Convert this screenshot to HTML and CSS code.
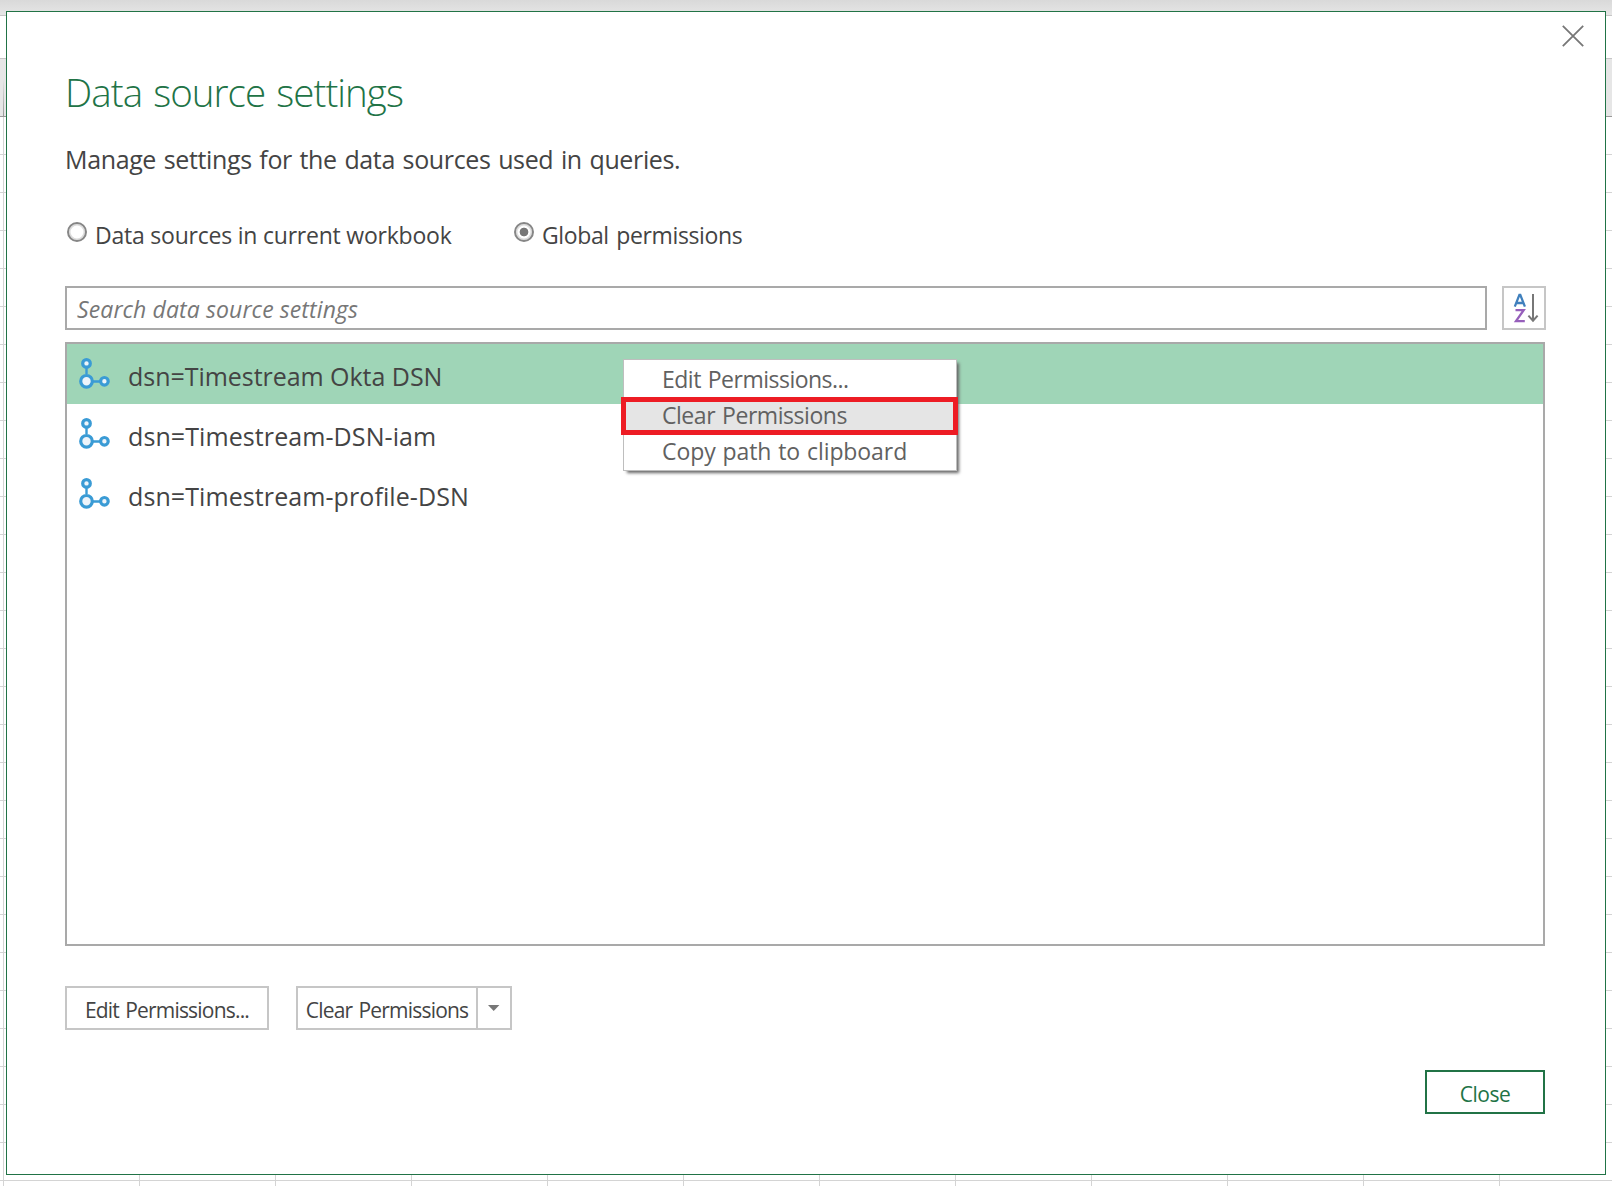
FILE: index.html
```html
<!DOCTYPE html>
<html lang="en">
<head>
<meta charset="utf-8">
<title>Data source settings</title>
<link rel="stylesheet" href="styles.css">
</head>
<body>
<svg width="0" height="0" class="defs">
  <symbol id="nodes" viewBox="0 0 32 32">
    <g fill="#eef4fa" stroke="#3a9bd5" stroke-width="3.2">
      <path d="M7.5 8v8M14 23.5h7" fill="none" stroke-width="2.4"/>
      <circle cx="7.5" cy="5.4" r="3.8"/>
      <circle cx="7.5" cy="23.3" r="5.8"/>
      <circle cx="25.4" cy="23.3" r="3.8"/>
    </g>
  </symbol>
</svg>
<main class="dialog">
  <button class="dismiss" aria-label="Close"><svg width="22" height="22" viewBox="0 0 22 22"><path d="M.8.8l20.4 20.4M21.2.8L.8 21.2" stroke="#777" stroke-width="1.8"/></svg></button>
  <h1><span class="t-title">Data source settings</span></h1>
  <p class="subtitle"><span class="t-sub">Manage settings for the data sources used in queries.</span></p>
  <div class="scopes">
    <label class="scope"><i class="radio"></i><span class="t-r1">Data sources in current workbook</span></label>
    <label class="scope"><i class="radio on"></i><span class="t-r2">Global permissions</span></label>
  </div>
  <div class="tools">
    <div class="search"><span class="t-search">Search data source settings</span></div>
    <button class="sort" aria-label="Sort">
      <svg width="40" height="40" viewBox="0 0 40 40">
        <g fill="none" stroke-width="2.3">
          <path d="M10.8 18.6L15.4 6.8h.9l4.6 11.8M12.3 15h7.1" stroke="#4080bd"/>
          <path d="M11.5 22.2h8.2L12 33.2h8.8" stroke="#965fbb"/>
          <path d="M29 6v27M24.4 27.6l4.6 5.1 4.6-5.1" stroke="#777" stroke-width="2"/>
        </g>
      </svg>
    </button>
  </div>
  <ul class="list">
    <li class="row selected"><svg class="node"><use href="#nodes"/></svg><span class="t-i1">dsn=Timestream Okta DSN</span></li>
    <li class="row"><svg class="node"><use href="#nodes"/></svg><span class="t-i2">dsn=Timestream-DSN-iam</span></li>
    <li class="row"><svg class="node"><use href="#nodes"/></svg><span class="t-i3">dsn=Timestream-profile-DSN</span></li>
  </ul>
  <div class="actions">
    <button class="btn edit"><span class="t-b1">Edit Permissions...</span></button>
    <div class="split">
      <button class="main"><span class="t-b2">Clear Permissions</span></button>
      <button class="drop" aria-label="More"><svg width="12" height="6" viewBox="0 0 12 6"><path d="M0 0h11.4L5.7 6z" fill="#777"/></svg></button>
    </div>
  </div>
  <div class="footer"><button class="btn close"><span class="t-close">Close</span></button></div>
  <div class="menu">
    <div class="item"><span class="t-m1">Edit Permissions...</span></div>
    <div class="item marked"><span class="t-m2">Clear Permissions</span></div>
    <div class="item"><span class="t-m3">Copy path to clipboard</span></div>
  </div>
</main>
</body>
</html>
```
FILE: styles.css
```css
*, *::after { box-sizing: border-box; }
body {
  margin: 0;
  width: 1612px;
  height: 1186px;
  padding: 11px 6px;
  overflow: hidden;
  font-family: "Open Sans", "Noto Sans", sans-serif;
  color: #444;
  background:
    linear-gradient(#d9d9d9, #e6e6e6) 0 0 / 100% 15px no-repeat,
    linear-gradient(#c6c6c6, #c6c6c6) 0 15px / 100% 1px no-repeat,
    linear-gradient(#fff, #fff) 0 16px / 100% 42px no-repeat,
    linear-gradient(#c6c6c6, #c6c6c6) 0 58px / 100% 1px no-repeat,
    linear-gradient(#e6e6e600, #999) 3px 79px / 1px 37px no-repeat,
    linear-gradient(#e6e6e6, #e6e6e6) 0 59px / 100% 57px no-repeat,
    linear-gradient(#999, #999) 0 116px / 100% 1px no-repeat,
    repeating-linear-gradient(to bottom, #d4d4d4 0 1px, transparent 1px 38px) 0 116px / 100% 1070px no-repeat,
    repeating-linear-gradient(to right, #d4d4d4 0 1px, transparent 1px 136px) 3px 117px / 1609px 1069px no-repeat,
    #fff;
}
.defs { position: absolute; }
button { font: inherit; color: inherit; background: #fff; border: 0; padding: 0; display: flex; align-items: center; justify-content: center; }
span { white-space: nowrap; }
.dialog {
  position: relative;
  width: 1600px;
  height: 1164px;
  border: 1px solid #217346;
  background: #fff;
  padding: 53px 59px 0 58px;
}
.dismiss { position: absolute; right: 21px; top: 13px; }
h1 { margin: 0; font-size: 38.5px; line-height: 54px; font-weight: 300; color: #217346; }
.subtitle { margin: 23px 0 0; font-size: 25px; line-height: 35px; }
.scopes { display: flex; margin-top: 41px; height: 32px; font-size: 23px; line-height: 35px; }
.scope { display: flex; gap: 8px; padding-left: 2px; width: 447px; }
.radio { width: 20px; height: 20px; margin-top: 4px; border-radius: 50%; border: 2px solid #868686; box-shadow: inset 0 0 0 1.5px #ddd; }
.radio.on { background: radial-gradient(circle, #777 0 4px, transparent 4.7px); }
.tools { display: flex; justify-content: space-between; margin-top: 36px; }
.search { width: 1422px; height: 44px; border: 2px solid #a9a9a9; padding-left: 10px; font-size: 23px; line-height: 43px; font-style: italic; color: #777; }
.sort { width: 44px; height: 44px; border: 2px solid #c6c6c6; }
.list { list-style: none; margin: 12px 0 0; padding: 0; width: 1480px; height: 604px; border: 2px solid #a9a9a9; }
.row { display: flex; align-items: center; height: 60px; padding-left: 12px; gap: 17px; font-size: 25px; line-height: 60px; }
.row span { padding-top: 3px; }
.selected { background: #9fd5b7; }
.node { width: 32px; height: 32px; }
.actions { display: flex; gap: 27px; margin-top: 40px; font-size: 21px; line-height: 40px; }
.btn { height: 44px; border: 2px solid #c6c6c6; }
.edit { width: 204px; }
.split { display: flex; width: 216px; height: 44px; border: 2px solid #c6c6c6; }
.main { width: 178px; }
.drop { flex: 1; border-left: 2px solid #c6c6c6; }
.footer { display: flex; justify-content: flex-end; margin: 40px 1px 0 0; font-size: 21px; line-height: 40px; }
.close { width: 120px; border-color: #217346; color: #217346; }
.btn span, .main span { padding-top: 4px; }
.menu { position: absolute; left: 616px; top: 347px; width: 334px; height: 112px; padding-top: 1px; border: 1px solid #bebebe; background: #fff; box-shadow: 3px 3px 3px -1px #666; font-size: 23px; line-height: 37px; color: #616161; }
.item { height: 36px; padding-left: 38px; }
.marked { position: relative; background: #e5e5e5; }
.marked::after { content: ""; position: absolute; left: -3px; top: 0; width: 337px; height: 38px; border: 5px solid #ed1c24; }
.t-title { letter-spacing: -0.94px; word-spacing: 2px; }
.t-sub { letter-spacing: -0.36px; word-spacing: 1.5px; }
.t-r1 { letter-spacing: -0.22px; }
.t-r2 { letter-spacing: -0.38px; word-spacing: 2px; }
.t-search { letter-spacing: 0.11px; }
.t-i1 { letter-spacing: -0.04px; }
.t-i2, .t-i3 { letter-spacing: 0.09px; }
.t-m1 { letter-spacing: -0.51px; word-spacing: 1.5px; }
.t-m2 { letter-spacing: -0.46px; word-spacing: 1.5px; }
.t-m3 { letter-spacing: -0.08px; word-spacing: 1px; }
.t-b1, .t-b2 { letter-spacing: -0.8px; word-spacing: 1.5px; }
.t-close { letter-spacing: -0.45px; }
```
